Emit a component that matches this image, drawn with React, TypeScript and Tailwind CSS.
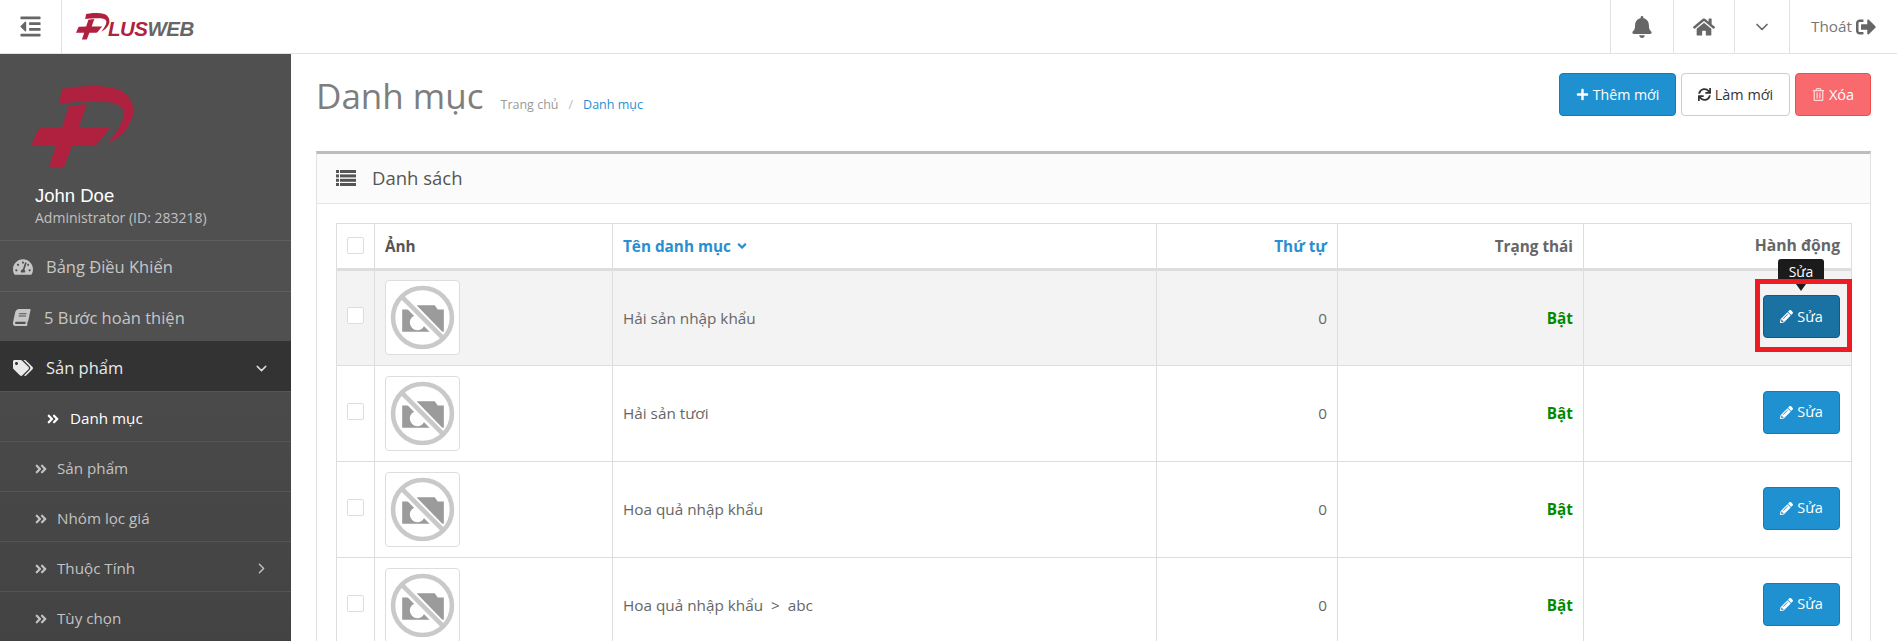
import React from "react";
import { ChevronDown, ChevronRight } from "lucide-react";
import {
  FaOutdent, FaBell, FaHome, FaAngleDoubleRight, FaSignOutAlt,
  FaTachometerAlt, FaBook, FaTags, FaPlus, FaSync, FaRegTrashAlt, FaPencilAlt, FaAngleDown,
} from "react-icons/fa";

const PlusMark = ({ className }: { className: string }) => (
  <svg viewBox="0 0 104 82" className={className} aria-hidden="true">
    <path fill="#b0213f" d="M31 3 C46 0 58 0 66 0 C82 1 93 3 99 13 C105 24 102 33 96 42 C90 50 84 54 77 57 C84 48 92 38 93 28 C93 21 88 18 76 16 C62 15 44 15 28 18 Z" />
    <path fill="#b0213f" d="M38 20 L56 18 L48 41 L80 41 L66 58 C65 59 64 60 62 60 L41 60 L33 81 L18 81 L25 60 L0 60 L6 46 C7 43 9 42 12 42 L31 41 Z" />
  </svg>
);

const NoPhoto = () => (
  <svg viewBox="0 0 64 64" className="h-[65px] w-[65px]" aria-hidden="true">
    <path fill="#9b9b9b" d="M12 24 H24 L27 20 H44 L47 24 H53 V46 H12 Z" />
    <circle cx="27" cy="37" r="7.5" fill="#ffffff" />
    <path stroke="#ffffff" strokeWidth="9" d="M15 15 L50 51" />
    <circle cx="32" cy="32" r="29" fill="none" stroke="#c9c9c9" strokeWidth="4.5" />
    <path stroke="#c9c9c9" strokeWidth="4.5" d="M12 12 L52 52" />
  </svg>
);

const ListIcon = () => (
  <svg viewBox="0 0 20 16" className="mr-[16px] h-[16px] w-[20px]" fill="#555" aria-hidden="true">
    <rect x="0" y="0" width="3" height="3" />
    <rect x="4" y="0" width="16" height="3" />
    <rect x="0" y="4.4" width="3" height="3" />
    <rect x="4" y="4.4" width="16" height="3" />
    <rect x="0" y="8.8" width="3" height="3" />
    <rect x="4" y="8.8" width="16" height="3" />
    <rect x="0" y="13" width="3" height="3" />
    <rect x="4" y="13" width="16" height="3" />
  </svg>
);

const NavTop = ({ icon, label, active, iconClass }: { icon: React.ReactNode; label: string; active?: boolean; iconClass?: string }) => (
  <div className={`flex items-center border-t pl-[13px] pr-[21px] pt-[3px] text-[16.5px] ${active ? "h-[50px] border-[#333] bg-[#333] text-[#e9e9e9]" : "h-[51px] border-[#5e5e5e] text-[#c6c6c6]"}`}>
    <span className={`flex shrink-0 items-center ${iconClass ?? "w-[33px]"}`}>{icon}</span>
    <span>{label}</span>
    {active && <ChevronDown size={17} strokeWidth={2} className="ml-auto text-[#ddd]" />}
  </div>
);

const NavSub = ({ label, active, more }: { label: string; active?: boolean; more?: boolean }) => (
  <div className={`flex h-[50px] items-center border-t border-[#555] pr-[21px] pt-[4px] text-[15.2px] ${active ? "pl-[46px] text-white" : "pl-[34px] text-[#c2c2c2]"}`}>
    <FaAngleDoubleRight className={`text-[14px] ${active ? "mr-[10px]" : "mr-[9px]"}`} />
    <span>{label}</span>
    {more && <ChevronRight size={17} strokeWidth={2} className="ml-auto" />}
  </div>
);

const Row = ({ name, hover }: { name: string; hover?: boolean }) => (
  <tr className={`h-[96px] ${hover ? "bg-[#f3f3f3]" : "bg-white"}`}>
    <td className="border border-[#ddd] text-center align-middle">
      <span className="mx-auto -mt-[5px] block h-[17px] w-[17px] rounded-[2px] border border-[#ddd] bg-white" />
    </td>
    <td className="border border-[#ddd] pl-[10px] align-middle">
      <div className="-mt-[1px] flex h-[75px] w-[75px] items-center justify-center rounded-[4px] border border-[#ddd] bg-white">
        <NoPhoto />
      </div>
    </td>
    <td className="border border-[#ddd] pl-[10px] text-[15.3px] text-[#666]">{name}</td>
    <td className="border border-[#ddd] pr-[10px] text-right text-[15.3px] text-[#666]">0</td>
    <td className="border border-[#ddd] pr-[10px] text-right text-[15.3px] font-bold text-[#008a00]">Bật</td>
    <td className="border border-[#ddd] pr-[11px] text-right">
      <div className="relative -mt-[3px] inline-block align-middle">
        <button className={`flex h-[43px] w-[77px] items-center justify-center gap-[4px] rounded-[4px] border text-[14.5px] text-white ${hover ? "border-[#125a80] bg-[#1a72a3]" : "border-[#1a7ab0] bg-[#1f91d0]"}`}>
          <FaPencilAlt className="text-[13px]" />
          Sửa
        </button>
        {hover && (
          <>
            <div className="absolute left-[15px] top-[-36px] flex h-[25px] w-[46px] items-center justify-center rounded-[3px] bg-[#1b1b1b] text-[14px] text-white">Sửa</div>
            <div className="absolute left-[33px] top-[-11px] h-0 w-0 border-x-[5px] border-t-[7px] border-x-transparent border-t-[#1b1b1b]" />
            <div className="absolute left-[-8px] top-[-16px] h-[73px] w-[97px] border-[5px] border-[#ed1c24]" />
          </>
        )}
      </div>
    </td>
  </tr>
);

export default function App() {
  return (
    <div className="flex h-[641px] w-[1897px] flex-col overflow-hidden bg-white font-['Open_Sans',sans-serif] text-[#555]">
      <header className="flex h-[54px] shrink-0 items-stretch border-b border-[#e2e2e2] bg-white">
        <div className="flex w-[62px] items-center justify-center border-r border-[#e2e2e2]">
          <FaOutdent className="text-[23px] text-[#666]" />
        </div>
        <div className="flex items-center pl-[14px]">
          <PlusMark className="h-[27px] w-[34px]" />
          <span className="ml-[-2px] mt-[5px] font-['Liberation_Sans',sans-serif] text-[20.5px] font-bold italic leading-none tracking-[-0.5px]">
            <span className="text-[#b0213f]">LUS</span>
            <span className="text-[#666]">WEB</span>
          </span>
        </div>
        <div className="ml-auto flex items-stretch">
          <div className="flex w-[63px] items-center justify-center border-l border-[#e2e2e2]"><FaBell className="text-[22px] text-[#666]" /></div>
          <div className="flex w-[61px] items-center justify-center border-l border-[#e2e2e2]"><FaHome className="text-[22px] text-[#666]" /></div>
          <div className="flex w-[55px] items-center justify-center border-l border-[#e2e2e2]"><ChevronDown size={20} strokeWidth={2} className="text-[#666]" /></div>
          <div className="flex w-[108px] items-center gap-[4px] border-l border-[#e2e2e2] pl-[21px] text-[15.3px] text-[#777]">
            Thoát <FaSignOutAlt className="text-[20px] text-[#666]" />
          </div>
        </div>
      </header>

      <div className="flex min-h-0 flex-1">
        <aside className="flex w-[291px] shrink-0 flex-col bg-[#505050]">
          <div className="h-[187px] pl-[31px] pt-[32px]">
            <PlusMark className="h-[82px] w-[104px]" />
            <div className="ml-[4px] mt-[16px] font-['Liberation_Sans',sans-serif] text-[18.5px] leading-[24px] text-white">John Doe</div>
            <div className="ml-[4px] mt-0 text-[14px] leading-[20px] text-[#c0c0c0]">Administrator (ID: 283218)</div>
          </div>
          <NavTop icon={<FaTachometerAlt className="text-[20px]" />} label="Bảng Điều Khiển" />
          <NavTop icon={<FaBook className="-skew-x-12 text-[17px]" />} label="5 Bước hoàn thiện" iconClass="w-[31px]" />
          <NavTop icon={<FaTags className="text-[20px]" />} label="Sản phẩm" active />
          <div className="flex-1 bg-gradient-to-b from-[#4a4a4a] to-[#434343]">
            <NavSub label="Danh mục" active />
            <NavSub label="Sản phẩm" />
            <NavSub label="Nhóm lọc giá" />
            <NavSub label="Thuộc Tính" more />
            <NavSub label="Tùy chọn" />
          </div>
        </aside>

        <main className="min-w-0 flex-1 pl-[25px] pr-[26px] pt-[19px]">
          <div className="flex h-[78px] items-start">
            <h1 className="-mt-[2px] text-[35px] font-normal leading-[50px] text-[#7e7e7e]">Danh mục</h1>
            <div className="ml-[17px] mt-[22px] flex items-center text-[12.5px] leading-[20px]">
              <span className="text-[#9a9a9a]">Trang chủ</span>
              <span className="mx-[10px] text-[#bbb]">/</span>
              <span className="text-[#2a8fd0]">Danh mục</span>
            </div>
            <div className="ml-auto flex gap-[5px]">
              <button className="flex h-[43px] w-[117px] items-center justify-center gap-[4px] rounded-[4px] border border-[#1a7ab0] bg-[#1f91d0] text-[14.2px] text-white"><FaPlus className="text-[13px]" />Thêm mới</button>
              <button className="flex h-[43px] w-[109px] items-center justify-center gap-[4px] rounded-[4px] border border-[#ccc] bg-white text-[14.4px] text-[#333]"><FaSync className="text-[13px]" />Làm mới</button>
              <button className="flex h-[43px] w-[76px] items-center justify-center gap-[4px] rounded-[4px] border border-[#ee4d4d] bg-[#f96a6e] text-[14.5px] text-white"><FaRegTrashAlt className="text-[13px] text-[#ffd9d9]" />Xóa</button>
            </div>
          </div>

          <section className="border-x border-t-[3px] border-x-[#e2e2e2] border-t-[#bdbdbd] bg-white">
            <div className="flex h-[50px] items-center border-b border-[#e5e5e5] bg-[#fbfbfb] pb-[2px] pl-[19px] text-[18.5px] text-[#555]">
              <ListIcon />
              Danh sách
            </div>
            <div className="pl-[19px] pr-[20px] pt-[19px]">
              <table className="w-[1515px] table-fixed border-collapse">
                <colgroup>
                  <col className="w-[38px]" />
                  <col className="w-[238px]" />
                  <col className="w-[544px]" />
                  <col className="w-[181px]" />
                  <col className="w-[246px]" />
                  <col className="w-[268px]" />
                </colgroup>
                <thead>
                  <tr className="h-[46px] text-[15.3px] font-bold">
                    <th className="border border-b-[3px] border-[#ddd]"><span className="mx-auto -mt-[2px] block h-[17px] w-[17px] rounded-[2px] border border-[#ddd] bg-white" /></th>
                    <th className="border border-b-[3px] border-[#ddd] pl-[10px] text-left text-[#555]">Ảnh</th>
                    <th className="border border-b-[3px] border-[#ddd] pl-[10px] text-left text-[#2a8fd0]">
                      <span className="inline-flex items-center gap-[4px]">Tên danh mục <FaAngleDown className="text-[14px]" /></span>
                    </th>
                    <th className="border border-b-[3px] border-[#ddd] pr-[10px] text-right text-[#2a8fd0]">Thứ tự</th>
                    <th className="border border-b-[3px] border-[#ddd] pr-[10px] text-right text-[#666]">Trạng thái</th>
                    <th className="border border-b-[3px] border-[#ddd] pr-[11px] text-right text-[15.7px] text-[#666]">Hành động</th>
                  </tr>
                </thead>
                <tbody>
                  <Row name="Hải sản nhập khẩu" hover />
                  <Row name="Hải sản tươi" />
                  <Row name="Hoa quả nhập khẩu" />
                  <Row name={"Hoa quả nhập khẩu\u00a0\u00a0>\u00a0\u00a0abc"} />
                </tbody>
              </table>
            </div>
          </section>
        </main>
      </div>
    </div>
  );
}
